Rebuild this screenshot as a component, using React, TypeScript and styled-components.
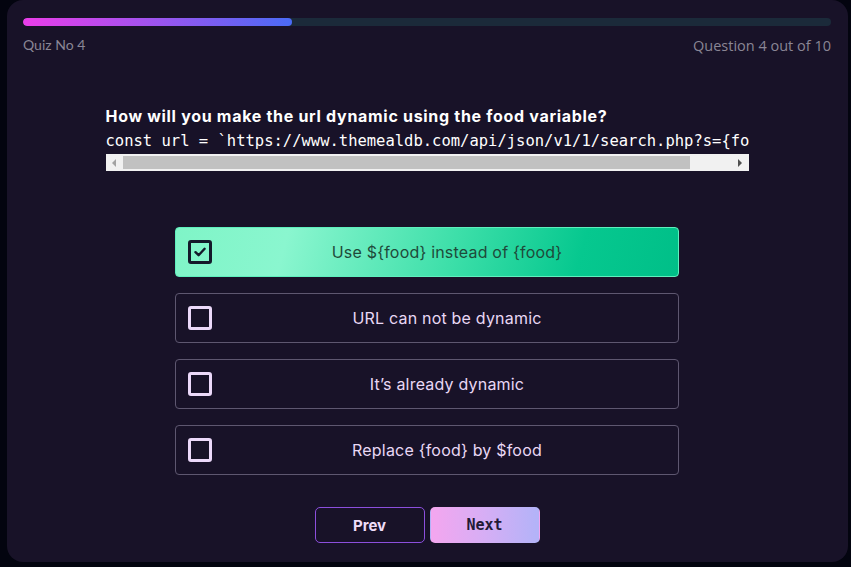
import React, { useState } from 'react'
import styled, { createGlobalStyle } from 'styled-components'

const GlobalStyle = createGlobalStyle`
  html, body {
    margin: 0;
    padding: 0;
    background: #03040f;
  }
  body {
    font-family: Inter, "Noto Sans", sans-serif;
  }
`

const StyledCard = styled.div`
  box-sizing: border-box;
  width: 841px;
  height: 562px;
  margin-left: 7px;
  padding: 18px 17px 0 16px;

  display: flex;
  flex-direction: column;

  background-color: #181228;
  border-radius: 16px;
`

const StyledTrack = styled.div`
  height: 8px;
  border-radius: 4px;
  background-color: #1b2a3a;
  overflow: hidden;
`

const StyledFill = styled.div`
  height: 100%;
  border-radius: 4px;
  background: linear-gradient(90deg, #ea3de9 0%, #a452ee 45%, #4a6bf6 100%);
`

const StyledHeader = styled.div`
  display: flex;
  justify-content: space-between;
  margin-top: 10px;

  span {
    font-size: 14px;
    color: #8a8695;
  }

  span:first-child {
    font-family: Lato, sans-serif;
  }

  span:last-child {
    font-family: "Open Sans", sans-serif;
    font-size: 14.5px;
  }
`

const StyledQuestion = styled.div`
  width: 643px;
  margin: 51px auto 0 auto;
`

const StyledTitle = styled.h2`
  margin: 0 0 5px 0;
  font-family: Inter, sans-serif;
  font-size: 16px;
  font-weight: 700;
  color: #ffffff;
  letter-spacing: 0.7px;
`

const StyledCode = styled.pre`
  margin: 0 0 3px 0;
  overflow: hidden;
  font-family: "DejaVu Sans Mono", monospace;
  font-size: 15.5px;
  line-height: 20px;
  color: #ffffff;
`

// drawn scrollbar, the headless browser hides real ones
const StyledScrollbar = styled.div`
  height: 17px;
  display: flex;
  background-color: #f1f1f1;
`

const StyledScrollButton = styled.div<{ $dir: 'left' | 'right' }>`
  width: 17px;
  display: flex;
  align-items: center;
  justify-content: center;

  &::before {
    content: '';
    width: 0;
    height: 0;
    border-top: 4px solid transparent;
    border-bottom: 4px solid transparent;
    ${(p) =>
      p.$dir === 'left'
        ? 'border-right: 4px solid #a3a3a3;'
        : 'border-left: 4px solid #505050;'}
  }
`

const StyledScrollTrack = styled.div`
  flex: 1;
  padding: 2px 0;
`

const StyledThumb = styled.div`
  height: 100%;
  background-color: #c1c1c1;
`

const StyledOptions = styled.div`
  width: 504px;
  margin: 56px auto 0 auto;

  display: flex;
  flex-direction: column;
  gap: 16px;
`

const StyledOption = styled.button<{ $selected: boolean }>`
  box-sizing: border-box;
  height: 50px;
  width: 100%;
  padding: 0 12px;

  display: flex;
  align-items: center;

  border-radius: 4px;
  border: 1px solid ${(p) => (p.$selected ? '#5ef0bd' : '#5e5770')};
  background: ${(p) =>
    p.$selected
      ? 'linear-gradient(105deg, #7ff5c7 0%, #8af6cf 22%, #3ddfa9 55%, #06c88f 80%, #00bf88 100%)'
      : 'transparent'};
  cursor: pointer;

  font-family: Inter, sans-serif;
  font-size: 16px;
  letter-spacing: 0.2px;
  color: ${(p) => (p.$selected ? '#1f4a3a' : '#e9d8f5')};
`

const StyledCheckbox = styled.span<{ $selected: boolean }>`
  box-sizing: border-box;
  width: 24px;
  height: 24px;
  flex-shrink: 0;

  display: flex;
  align-items: center;
  justify-content: center;

  border-radius: 3px;
  border: 3px solid ${(p) => (p.$selected ? '#14192a' : '#ecd9fa')};
`

const StyledLabel = styled.span`
  flex: 1;
  text-align: center;
  margin-left: 16px;
`

const StyledButtons = styled.div`
  display: flex;
  justify-content: center;
  gap: 5px;
  margin-top: 32px;
`

const StyledNavButton = styled.button<{ $primary?: boolean }>`
  box-sizing: border-box;
  width: 110px;
  height: 36px;
  border-radius: 5px;
  cursor: pointer;

  font-size: 15px;
  font-weight: 700;

  border: 1px solid ${(p) => (p.$primary ? 'transparent' : '#8c4fdc')};
  background: ${(p) =>
    p.$primary ? 'linear-gradient(90deg, #f4a6ef 0%, #d6aef5 50%, #b2b3f8 100%)' : 'transparent'};
  color: ${(p) => (p.$primary ? '#221a36' : '#eedcf8')};
  font-family: ${(p) => (p.$primary ? '"DejaVu Sans Mono", monospace' : 'Inter, sans-serif')};
`

const options = [
  'Use ${food} instead of {food}',
  'URL can not be dynamic',
  'It\u2019s already dynamic',
  'Replace {food} by $food',
]

const code = 'const url = `https://www.themealdb.com/api/json/v1/1/search.php?s={food}`;'

const Check = () => (
  <svg width="14" height="14" viewBox="0 0 14 14" fill="none">
    <path d="M2.5 7.2 L5.6 10.2 L11.6 3.8" stroke="#14192a" strokeWidth="2.4" strokeLinecap="round" strokeLinejoin="round" />
  </svg>
)

export default function App() {
  const [selected, setSelected] = useState(0)

  return (
    <>
      <GlobalStyle />
      <StyledCard>
        <StyledTrack>
          <StyledFill style={{ width: `${(4 / 12) * 100}%` }} />
        </StyledTrack>
        <StyledHeader>
          <span>Quiz No 4</span>
          <span>Question 4 out of 10</span>
        </StyledHeader>

        <StyledQuestion>
          <StyledTitle>How will you make the url dynamic using the food variable?</StyledTitle>
          <StyledCode>{code}</StyledCode>
          <StyledScrollbar>
            <StyledScrollButton $dir="left" />
            <StyledScrollTrack>
              <StyledThumb style={{ width: `${(69 / code.length) * 100}%` }} />
            </StyledScrollTrack>
            <StyledScrollButton $dir="right" />
          </StyledScrollbar>
        </StyledQuestion>

        <StyledOptions>
          {options.map((text, i) => (
            <StyledOption key={text} $selected={selected === i} onClick={() => setSelected(i)}>
              <StyledCheckbox $selected={selected === i}>{selected === i && <Check />}</StyledCheckbox>
              <StyledLabel>{text}</StyledLabel>
            </StyledOption>
          ))}
        </StyledOptions>

        <StyledButtons>
          <StyledNavButton>Prev</StyledNavButton>
          <StyledNavButton $primary>Next</StyledNavButton>
        </StyledButtons>
      </StyledCard>
    </>
  )
}
